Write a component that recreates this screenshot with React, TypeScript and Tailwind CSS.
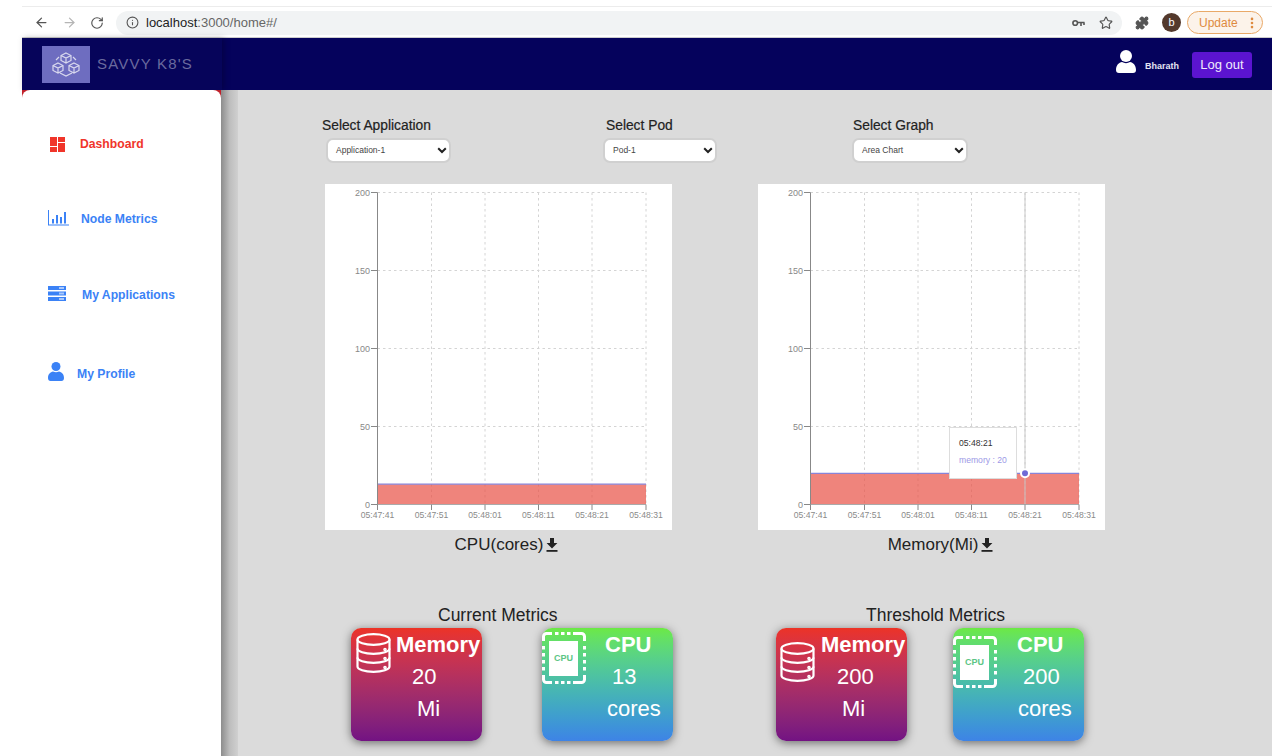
import React from "react";
import { ArrowLeft, ArrowRight, RotateCw, Info, Star, Puzzle, EllipsisVertical } from "lucide-react";

const W = 347;
const xs = [52.5, 106.5, 160, 213.5, 267, 321];
const labels = ["05:47:41", "05:47:51", "05:48:01", "05:48:11", "05:48:21", "05:48:31"];
const ys = [{ v: 200, y: 8.5 }, { v: 150, y: 86.5 }, { v: 100, y: 164.5 }, { v: 50, y: 242.5 }, { v: 0, y: 320.5 }];

function Chart({ value, active }: { value: number; active?: boolean }) {
  const top = 320.5 - value * 1.56;
  return (
    <div className="relative h-[346px] w-[347px] bg-white">
      <svg width={W} height={346} className="block" fontFamily="Liberation Sans, sans-serif">
        {xs.slice(1).map((x) => (
          <line key={x} x1={x} x2={x} y1={8.5} y2={320.5} stroke="#d4d4d4" strokeDasharray="2.5 3" />
        ))}
        {ys.slice(0, 4).map((t) => (
          <line key={t.v} x1={52.5} x2={321} y1={t.y} y2={t.y} stroke="#d4d4d4" strokeDasharray="2.5 3" />
        ))}
        <rect x={52.5} y={top} width={268.5} height={320.5 - top} fill="#e9554a" fillOpacity={0.72} />
        <line x1={52.5} x2={321} y1={top} y2={top} stroke="#8884d8" strokeWidth={1.2} />
        {active && <line x1={267} x2={267} y1={8.5} y2={320.5} stroke="#c8c8c8" strokeWidth={1} />}
        {active && <circle cx={267} cy={top} r={4} fill="#6f6ad6" stroke="#fff" strokeWidth={2} />}
        <line x1={52.5} x2={52.5} y1={8.5} y2={320.5} stroke="#888" />
        <line x1={52.5} x2={321} y1={320.5} y2={320.5} stroke="#aaa" />
        {ys.map((t) => (
          <g key={t.v}>
            <line x1={46} x2={52.5} y1={t.y} y2={t.y} stroke="#888" />
            <text x={45} y={t.y + 3} textAnchor="end" fontSize={9} fill="#888">{t.v}</text>
          </g>
        ))}
        {xs.map((x, i) => (
          <g key={x}>
            <line x1={x} x2={x} y1={320.5} y2={326} stroke="#888" />
            <text x={x} y={334} textAnchor="middle" fontSize={8.6} fill="#8a8a8a">{labels[i]}</text>
          </g>
        ))}
      </svg>
      {active && (
        <div className="absolute left-[191px] top-[243px] flex h-[52px] w-[68px] flex-col gap-[7px] border border-[#ddd] bg-white pl-[9px] pt-[10px] text-[8.6px] leading-[10px] [font-family:'Liberation_Sans',sans-serif]">
          <span className="text-[#333]">05:48:21</span>
          <span className="text-[#9c99e6]">memory : 20</span>
        </div>
      )}
    </div>
  );
}

function DownloadIcon() {
  return (
    <svg width="12" height="14" viewBox="0 0 12 14" className="block">
      <path d="M4 0h4v5h3.4L6 10.4 0.6 5H4z" fill="#222" />
      <rect x="0.5" y="12" width="11" height="1.8" fill="#222" />
    </svg>
  );
}

function Select({ value, width, ml }: { value: string; width: string; ml: string }) {
  return (
    <div className={`mt-[4px] flex h-[25px] items-center justify-between rounded-[7px] border-2 border-[#d0d0d0] bg-white pl-[8px] pr-[2px] text-[8.5px] text-[#444] ${width} ${ml}`}>
      <span>{value}</span>
      <svg width="10" height="7" viewBox="0 0 10 7"><path d="M1.2 1.2 5 5l3.8-3.8" fill="none" stroke="#222" strokeWidth="2" /></svg>
    </div>
  );
}

function Db() {
  return (
    <svg width="35" height="40" viewBox="0 0 35 40" fill="none" stroke="#fff" strokeWidth="2.2" className="block">
      <ellipse cx="17.5" cy="6.500" rx="16" ry="5.300" />
      <path d="M1.500 6.500v27c0 3 7 5.300 16 5.300s16-2.300 16-5.300v-27" />
      <path d="M1.500 15.500c0 3 7 5.300 16 5.300s16-2.300 16-5.300" />
      <path d="M1.500 24.500c0 3 7 5.300 16 5.300s16-2.300 16-5.300" />
      <circle cx="29" cy="16.500" r="0.700" fill="#fff" />
      <circle cx="29" cy="25.500" r="0.700" fill="#fff" />
      <circle cx="29" cy="34.500" r="0.700" fill="#fff" />
    </svg>
  );
}

const topTicks = [13, 19, 25, 31];
const sideTicks = [14, 21, 28, 35];

function Chip() {
  return (
    <div className="relative h-[52px] w-[44px]">
      <svg width="44" height="52" viewBox="0 0 44 52" className="absolute left-0 top-0" fill="#fff">
        <path d="M1.500 9V4.500a3 3 0 0 1 3-3H10M34 1.500h5.500a3 3 0 0 1 3 3V9M42.500 43v4.500a3 3 0 0 1-3 3H34M10 50.500H4.500a3 3 0 0 1-3-3V43" fill="none" stroke="#fff" strokeWidth="3" />
        {topTicks.map((x) => (
          <g key={x}>
            <rect x={x} y={0} width={3.500} height={3} />
            <rect x={x} y={49} width={3.500} height={3} />
          </g>
        ))}
        {sideTicks.map((y) => (
          <g key={y}>
            <rect x={0} y={y} width={3} height={3.500} />
            <rect x={41} y={y} width={3} height={3.500} />
          </g>
        ))}
        <rect x="7" y="9" width="29" height="35" />
      </svg>
      <span className="absolute left-0 top-[20px] w-[43px] text-center text-[9px] font-bold text-[#5dc585]">CPU</span>
    </div>
  );
}

function MemoryCard({ value, iconClass }: { value: string; iconClass: string }) {
  return (
    <div className="relative h-[113px] w-[131px] rounded-[10px] bg-gradient-to-b from-[#ec3326] to-[#731283] text-white shadow-[0_2px_10px_rgba(0,0,0,0.5)]">
      <div className={`absolute ${iconClass}`}><Db /></div>
      <div className="flex h-full flex-col pl-[45px]">
        <span className="pt-[4px] text-[22px] font-bold leading-[26px]">Memory</span>
        <span className="pl-[16px] pt-[6px] text-[22px] leading-[26px]">{value}</span>
        <span className="pl-[21px] pt-[6px] text-[22px] leading-[26px]">Mi</span>
      </div>
    </div>
  );
}

function CpuCard({ value, iconClass, textClass, valueClass, coresClass }: { value: string; iconClass: string; textClass: string; valueClass: string; coresClass: string }) {
  return (
    <div className="relative h-[113px] w-[131px] rounded-[10px] bg-gradient-to-b from-[#6ce944] to-[#3e83e6] text-white shadow-[0_2px_10px_rgba(0,0,0,0.5)]">
      <div className={`absolute ${iconClass}`}><Chip /></div>
      <div className={`flex h-full flex-col ${textClass}`}>
        <span className="pt-[4px] text-[22px] font-bold leading-[26px]">CPU</span>
        <span className={`pt-[6px] text-[22px] leading-[26px] ${valueClass}`}>{value}</span>
        <span className={`pt-[6px] text-[22px] leading-[26px] ${coresClass}`}>cores</span>
      </div>
    </div>
  );
}

function NavItem({ icon, label, color, gap, pl }: { icon: React.ReactNode; label: string; color: string; gap: string; pl: string }) {
  return (
    <div className={`flex h-[30px] items-center text-[12.2px] font-bold ${color} ${gap} ${pl}`}>
      {icon}
      <span>{label}</span>
    </div>
  );
}

export default function App() {
  return (
    <div className="flex h-[756px] w-[1272px] flex-col overflow-hidden bg-white [font-family:'Liberation_Sans',Arial,sans-serif] text-[#222]">
      {/* browser chrome */}
      <div className="flex h-[38px] shrink-0 flex-col">
        <div className="ml-[22px] mt-[6px] h-px bg-[#ececec]" />
        <div className="ml-[22px] flex flex-1 items-center border-b border-[#ccc] pl-[12px] pr-[9px] pt-[1px]">
          <ArrowLeft size={15} className="text-[#555]" />
          <ArrowRight size={15} className="ml-[13px] text-[#b5b5b5]" />
          <RotateCw size={14} className="ml-[13px] text-[#555]" />
          <div className="ml-[12px] flex h-[24px] flex-1 items-center rounded-full bg-[#f1f3f4] pl-[10px] pr-[7px] text-[13px]">
            <Info size={13} className="text-[#555]" />
            <span className="ml-[7px] text-[#222]">localhost</span>
            <span className="text-[#666]">:3000/home#/</span>
            <svg width="13" height="8" viewBox="0 0 13 8" className="ml-auto" fill="none" stroke="#555" strokeWidth="1.600">
              <circle cx="3.200" cy="4" r="2.300" />
              <path d="M5.500 3.500H12.500M9 3.500V7M12 3.500V6" />
            </svg>
            <Star size={14} className="ml-[14px] mr-[2px] text-[#555]" />
          </div>
          <Puzzle size={14} fill="#555" className="ml-[13px] text-[#555]" />
          <div className="ml-[13px] flex h-[19px] w-[19px] items-center justify-center rounded-full bg-[#53392c] text-[11px] text-white">b</div>
          <div className="ml-[6px] flex h-[23px] w-[76px] items-center justify-between rounded-full border border-[#e9a968] bg-[#fcf3ea] pl-[11px] pr-[3px] text-[12px] text-[#de8a3e]">
            <span>Update</span>
            <EllipsisVertical size={14} strokeWidth={2.500} />
          </div>
        </div>
      </div>

      {/* app */}
      <div className="ml-[22px] flex min-h-0 flex-1 flex-col">
        <header className="flex h-[52px] shrink-0 items-center bg-[#05025c]">
          <div className="flex h-full w-[200px] items-center bg-[#06045a] pl-[20px] shadow-[2px_0_6px_rgba(0,0,0,0.25)]">
            <div className="flex h-[37px] w-[48px] items-center justify-center bg-[#6e6dc0]">
              <svg width="30" height="26" viewBox="0 0 30 26" fill="none" stroke="#d9d9ee" strokeWidth="1.200">
                <path d="M15 2l5 2.500v5L15 12l-5-2.500v-5zM10 4.500l5 2.500 5-2.500M15 7v5" />
                <path d="M7 12l5 2.500v5L7 22l-5-2.500v-5zM2 14.500L7 17l5-2.500M7 17v5" />
                <path d="M23 12l5 2.500v5L23 22l-5-2.500v-5zM18 14.500l5 2.500 5-2.500M23 17v5" />
                <path d="M9 22l6 3 6-3M8 6l-3 3M22 6l3 3" />
              </svg>
            </div>
            <span className="ml-[7px] text-[15px] tracking-[1.200px] text-[#6a6a9e]">SAVVY K8'S</span>
          </div>
          <div className="ml-auto flex items-center pr-[20px] pt-[1px]">
            <svg width="20" height="24" viewBox="0 0 20 24" fill="#fff" className="mb-[6px]">
              <circle cx="10" cy="6" r="6" />
              <path d="M0 20c0-5 3-7.500 6-8 2.500 1.500 5.500 1.500 8 0 3 .5 6 3 6 8 0 2-1 3-3 3H3c-2 0-3-1-3-3z" />
            </svg>
            <span className="ml-[9px] mt-[4px] text-[9px] font-bold text-[#e4e4f2]">Bharath</span>
            <div className="ml-[13px] flex h-[26px] w-[60px] items-center justify-center rounded-[3px] bg-[#5b14d0] text-[13px] text-[#f0eafc]">Log out</div>
          </div>
        </header>

        <div className="flex min-h-0 flex-1">
          <aside className="relative z-10 h-full w-[199px] shrink-0 bg-[#c0202a]">
            <div className="h-full rounded-t-[8px] bg-white pt-[39px]">
              <NavItem pl="pl-[28px]" gap="gap-[15px]" color="text-[#f0352a]" label="Dashboard" icon={
                <svg width="15" height="15" viewBox="0 0 15 15" fill="#f0352a"><rect width="7" height="9" /><rect y="10" width="7" height="5" /><rect x="8" width="7" height="5" /><rect x="8" y="6" width="7" height="9" /></svg>
              } />
              <NavItem pl="pl-[26px]" gap="gap-[12px]" color="text-[#3b82f6] mt-[45px]" label="Node Metrics" icon={
                <svg width="21" height="16" viewBox="0 0 21 16" fill="#3b82f6" className="-mt-[2px]"><rect x="0" width="1" height="15" /><rect y="14.500" width="21" height="1" /><rect x="4" y="9" width="2" height="4.500" /><rect x="8" y="5" width="2" height="8.500" /><rect x="12" y="7" width="2" height="6.500" /><rect x="16" y="2" width="2" height="11.500" /></svg>
              } />
              <NavItem pl="pl-[26px]" gap="gap-[16px]" color="text-[#3b82f6] mt-[46px]" label="My Applications" icon={
                <svg width="18" height="15" viewBox="0 0 18 15" className="-mt-[3px]"><rect width="18" height="4" fill="#3b82f6" /><rect y="5.500" width="18" height="4" fill="#3b82f6" /><rect y="11" width="18" height="4" fill="#3b82f6" /><rect x="11" y="1" width="5" height="2" fill="#a9c8fb" /><rect x="11" y="6.500" width="5" height="2" fill="#a9c8fb" /><rect x="11" y="12" width="5" height="2" fill="#a9c8fb" /></svg>
              } />
              <NavItem pl="pl-[26px]" gap="gap-[13px]" color="text-[#3b82f6] mt-[49px]" label="My Profile" icon={
                <svg width="16" height="19" viewBox="0 0 16 19" fill="#3b82f6" className="-mt-[6px]"><circle cx="8" cy="4.500" r="4.500" /><path d="M0 16c0-4 2.500-6 5-6.500 2 1 4 1 6 0 2.500.5 5 2.500 5 6.500 0 2-1 3-2.500 3h-11C1 19 0 18 0 16z" /></svg>
              } />
            </div>
          </aside>
          <div className="h-full w-[17px] shrink-0 bg-gradient-to-r from-[#8d8d8d] via-[#bdbdbd] via-50% to-[#d0d0d0]" />

          <main className="min-w-0 flex-1 bg-[#dbdbdb] pl-[84px] pt-[28px] text-[#222]">
            <div className="flex h-[66px] text-[13.8px]">
              <div className="w-[284px]">
                <div className="leading-[16px] [-webkit-text-stroke:0.2px]">Select Application</div>
                <Select value="Application-1" width="w-[125px]" ml="ml-[4px]" />
              </div>
              <div className="w-[247px]">
                <div className="leading-[16px] [-webkit-text-stroke:0.2px]">Select Pod</div>
                <Select value="Pod-1" width="w-[114px]" ml="-ml-[3px]" />
              </div>
              <div>
                <div className="leading-[16px] [-webkit-text-stroke:0.2px]">Select Graph</div>
                <Select value="Area Chart" width="w-[116px]" ml="-ml-[1px]" />
              </div>
            </div>

            <div className="ml-[3px] flex gap-[86px]">
              <div className="w-[347px]">
                <Chart value={13} />
                <div className="mt-[5px] flex items-center justify-center gap-[3px] pl-[16px] text-[17px] leading-[20px]">CPU(cores)<DownloadIcon /></div>
              </div>
              <div className="w-[347px]">
                <Chart value={20} active />
                <div className="mt-[5px] flex items-center justify-center gap-[3px] pl-[18px] text-[17px] leading-[20px]">Memory(Mi)<DownloadIcon /></div>
              </div>
            </div>

            <div className="ml-[29px] mt-[50px] flex">
              <div className="w-[425px]">
                <div className="pl-[87px] text-[17.500px] leading-[20px]">Current Metrics</div>
                <div className="mt-[3px] flex gap-[60px]">
                  <MemoryCard value="20" iconClass="left-[5px] top-[5px]" />
                  <CpuCard value="13" iconClass="left-0 top-[4px]" textClass="pl-[63px]" valueClass="pl-[7px]" coresClass="pl-[2px]" />
                </div>
              </div>
              <div>
                <div className="pl-[90px] text-[17.500px] leading-[20px]">Threshold Metrics</div>
                <div className="mt-[3px] flex gap-[46px]">
                  <MemoryCard value="200" iconClass="left-[4px] top-[14px]" />
                  <CpuCard value="200" iconClass="left-0 top-[8px]" textClass="pl-[64px]" valueClass="pl-[6px]" coresClass="pl-[1px]" />
                </div>
              </div>
            </div>
          </main>
        </div>
      </div>
    </div>
  );
}
